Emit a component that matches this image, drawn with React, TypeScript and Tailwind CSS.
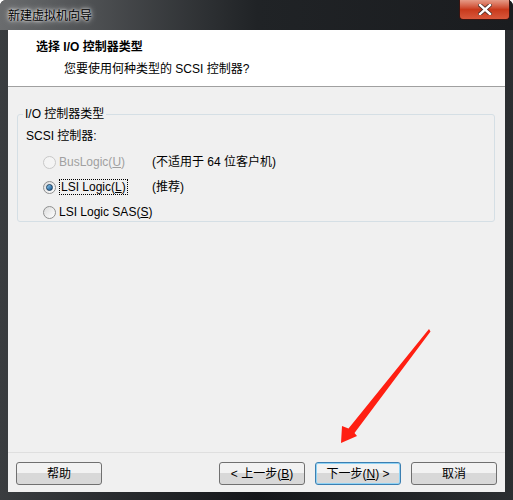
import React from "react";

const font = { fontFamily: '"Liberation Sans", "Noto Sans CJK SC", sans-serif' };

function Radio({ checked, disabled }: { checked?: boolean; disabled?: boolean }) {
  return (
    <span
      className={
        "flex h-[13px] w-[13px] items-center justify-center rounded-full border " +
        (disabled
          ? "border-[#c8c8c8] bg-[#f4f4f4]"
          : "border-[#8e8f8f] bg-gradient-to-br from-[#dcdcdc] to-[#ffffff]")
      }
    >
      {checked && (
        <span className="h-[7px] w-[7px] rounded-full bg-gradient-to-br from-[#8fd0f5] to-[#0c4f8a] border border-[#1a3e5e]" />
      )}
    </span>
  );
}

function Btn({ children, focused }: { children: React.ReactNode; focused?: boolean }) {
  return (
    <button
      className={
        "flex h-[23px] w-[86px] items-center justify-center rounded-[3px] border text-[12px] text-black bg-gradient-to-b from-[#f2f2f2] from-50% to-[#d8d8d8] to-50% " +
        (focused ? "border-[#3c7fb1] shadow-[inset_0_0_0_1px_#8fd3f5]" : "border-[#707070]")
      }
    >
      {children}
    </button>
  );
}

export default function App() {
  return (
    <div
      className="relative flex h-[500px] w-[513px] flex-col rounded-t-[6px] bg-gradient-to-r from-[#3a3d40] via-[#15171a] to-[#2b2e31] text-black"
      style={font}
    >
      <div className="flex h-[30px] shrink-0 items-start justify-between bg-gradient-to-r from-[#6a6c6e] via-[#202326] to-[#1a1c1f] rounded-t-[6px]">
        <span className="mt-[7px] ml-[8px] text-[12px] text-black [text-shadow:0_0_6px_#ffffff,0_0_3px_#ffffff]">
          新建虚拟机向导
        </span>
        <div className="mr-[3px] flex h-[20px] w-[51px] items-center justify-center rounded-b-[4px] border border-t-0 border-[#3a1410] bg-gradient-to-b from-[#e59a86] via-[#c9391b] to-[#d8573a]">
          <svg width="14" height="11" viewBox="0 0 14 11">
            <path d="M2 1 L12 10 M12 1 L2 10" stroke="#4a2a22" strokeWidth="4" strokeLinecap="square" />
            <path d="M2 1 L12 10 M12 1 L2 10" stroke="#ffffff" strokeWidth="2.4" strokeLinecap="square" />
          </svg>
        </div>
      </div>

      <div className="mx-[8px] mb-[8px] flex flex-1 flex-col bg-[#f0f0f0]">
        <div className="h-[57px] shrink-0 border-b border-[#a0a0a0] bg-white">
          <div className="ml-[28px] mt-[8px] text-[12px] font-bold">选择 I/O 控制器类型</div>
          <div className="ml-[56px] mt-[4px] text-[12px]">您要使用何种类型的 SCSI 控制器?</div>
        </div>

        <div className="flex-1 px-[9px] pr-[10px] pt-[18px]">
          <fieldset className="h-[117px] rounded-[3px] border border-[#d5dfe5] pl-[8px]">
            <legend className="ml-[-3px] px-[2px] text-[12px]">I/O 控制器类型</legend>
            <div className="mt-[4px] text-[12px]">SCSI 控制器:</div>
            <div className="mt-[9px] flex flex-col gap-[9px] text-[12px]">
              <div className="flex h-[16px] items-center">
                <span className="ml-[17px] w-[16px]"><Radio disabled /></span>
                <span className="w-[93px] text-[#a0a0a0]">
                  BusLogic(<u>U</u>)
                </span>
                <span>(不适用于 64 位客户机)</span>
              </div>
              <div className="flex h-[16px] items-center">
                <span className="ml-[17px] w-[16px]"><Radio checked /></span>
                <span className="w-[93px]">
                  <span className="border border-dotted border-black px-[1px]">
                    LSI Logic(<u>L</u>)
                  </span>
                </span>
                <span>(推荐)</span>
              </div>
              <div className="flex h-[16px] items-center">
                <span className="ml-[17px] w-[16px]"><Radio /></span>
                <span>
                  LSI Logic SAS(<u>S</u>)
                </span>
              </div>
            </div>
          </fieldset>
        </div>

        <div className="flex h-[40px] shrink-0 items-start border-t border-[#dfdfdf] px-[8px] pt-[9px]">
          <Btn>帮助</Btn>
          <div className="ml-auto flex gap-[10px]">
            <Btn>&lt; 上一步(<u>B</u>)</Btn>
            <Btn focused>下一步(<u>N</u>) &gt;</Btn>
            <Btn>取消</Btn>
          </div>
        </div>
      </div>

      <svg className="pointer-events-none absolute left-0 top-0" width="513" height="500" viewBox="0 0 513 500">
        <polygon
          points="429,329 430.5,331.5 354.5,433 357,436 341,443 342,426 348.5,428.5"
          fill="#ff1f12"
        />
      </svg>
    </div>
  );
}
